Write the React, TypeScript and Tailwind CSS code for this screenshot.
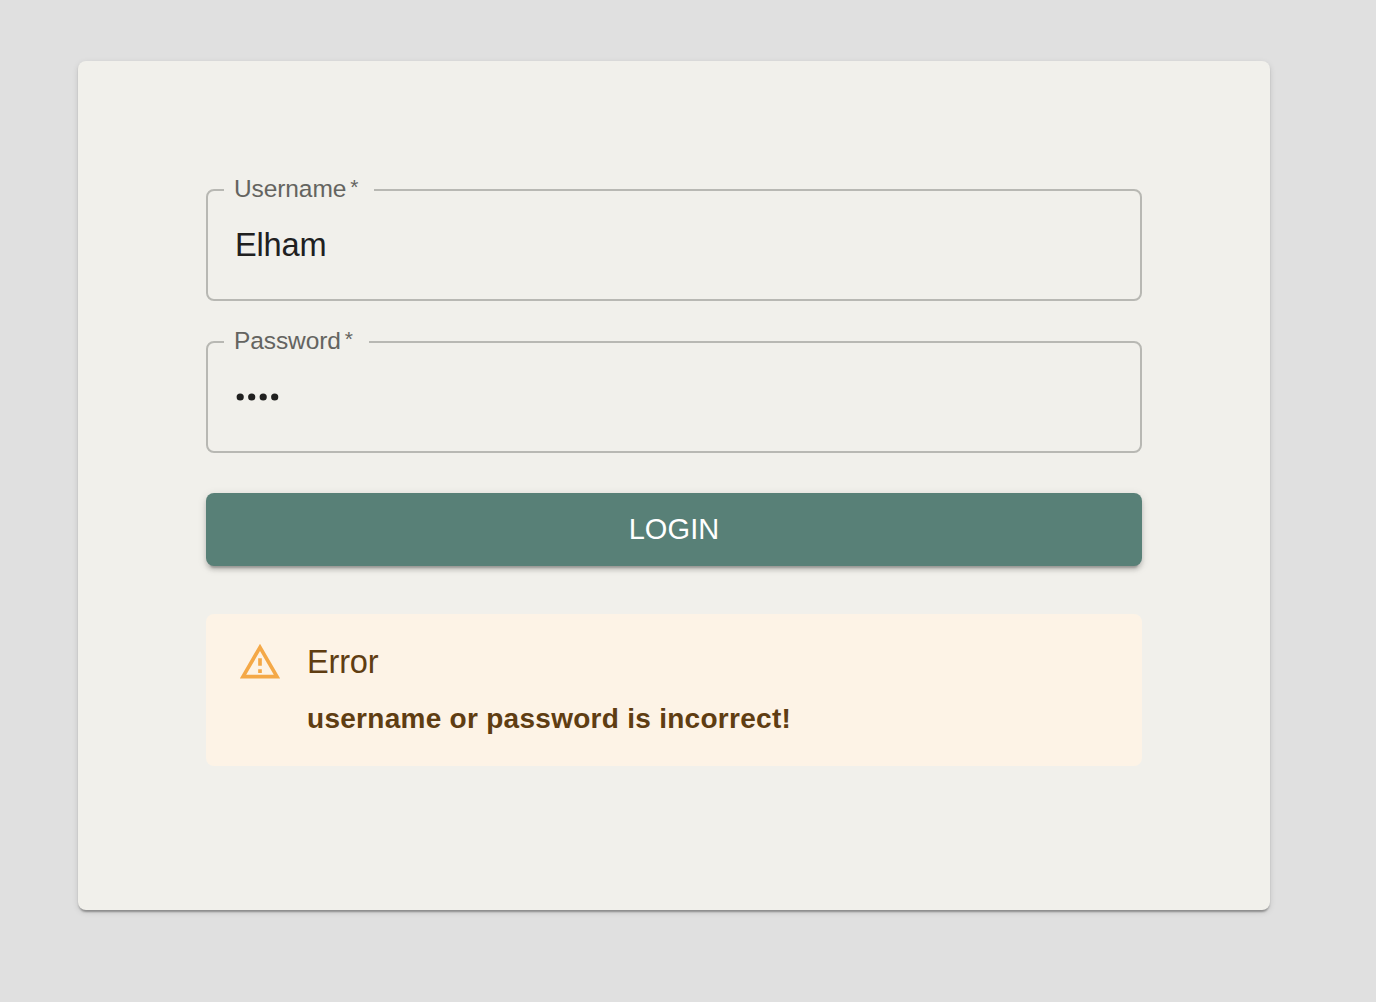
import type { ReactNode } from "react";

function Field({ label, legendWidth, children }: { label: string; legendWidth: string; children: ReactNode }) {
  return (
    <div className="relative flex h-28 items-center rounded-lg border-2 border-[#b8b8b3] px-[27px] leading-none">
      <div className={`absolute left-4 -top-[14px] flex h-6 items-center bg-[#f1f0eb] pl-[10px] text-[24.5px] text-[#646460] ${legendWidth}`}>
        <span className="tracking-[-0.1px]">{label}</span>
        <span className="ml-1 -mt-[6px] text-[21px]">*</span>
      </div>
      {children}
    </div>
  );
}

export default function App() {
  return (
    <main className="h-[1002px] w-[1376px] overflow-hidden bg-[#e0e0e0] pl-[78px] pt-[61px] font-['Liberation_Sans',Arial,sans-serif]">
      <section className="flex h-[849px] w-[1192px] flex-col rounded-lg bg-[#f1f0eb] px-32 pt-32 shadow-[0_4px_2px_-2px_rgba(0,0,0,0.2),0_2px_2px_rgba(0,0,0,0.14),0_2px_6px_rgba(0,0,0,0.12)]">
        <Field label="Username" legendWidth="w-[150px]">
          <span className="text-[32.6px] tracking-[-0.2px] text-[#20201f]">Elham</span>
        </Field>
        <div className="h-10" />
        <Field label="Password" legendWidth="w-[145px]">
          <svg className="-mt-[1px] h-2 w-12" viewBox="0 0 48 8" fill="#20201f">
            {[5.2, 16.7, 28.2, 39.7].map((cx) => (
              <circle key={cx} cx={cx} cy="4" r="3.6" />
            ))}
          </svg>
        </Field>
        <button className="mt-10 h-[73px] shrink-0 rounded-lg bg-[#588077] text-[29px] tracking-[0.1px] text-white shadow-[0_6px_2px_-4px_rgba(0,0,0,0.2),0_4px_4px_rgba(0,0,0,0.14),0_2px_10px_rgba(0,0,0,0.12)]">
          LOGIN
        </button>
        <div className="mt-12 flex h-[152px] shrink-0 rounded-lg bg-[#fdf3e6] pl-8 pt-[26px] text-[#5f3d12]">
          <svg className="size-11 shrink-0" viewBox="0 0 24 24" fill="#f4a847">
            <path d="M12 5.99L19.53 19H4.47L12 5.99M12 2L1 21h22L12 2zm1 14h-2v2h2v-2zm0-6h-2v4h2v-4z" />
          </svg>
          <div className="ml-[25px]">
            <h2 className="text-[32.6px] leading-[44px] tracking-[-0.2px]">Error</h2>
            <p className="mt-[15px] text-[28px] font-bold leading-10 tracking-[0.28px]">username or password is incorrect!</p>
          </div>
        </div>
      </section>
    </main>
  );
}
